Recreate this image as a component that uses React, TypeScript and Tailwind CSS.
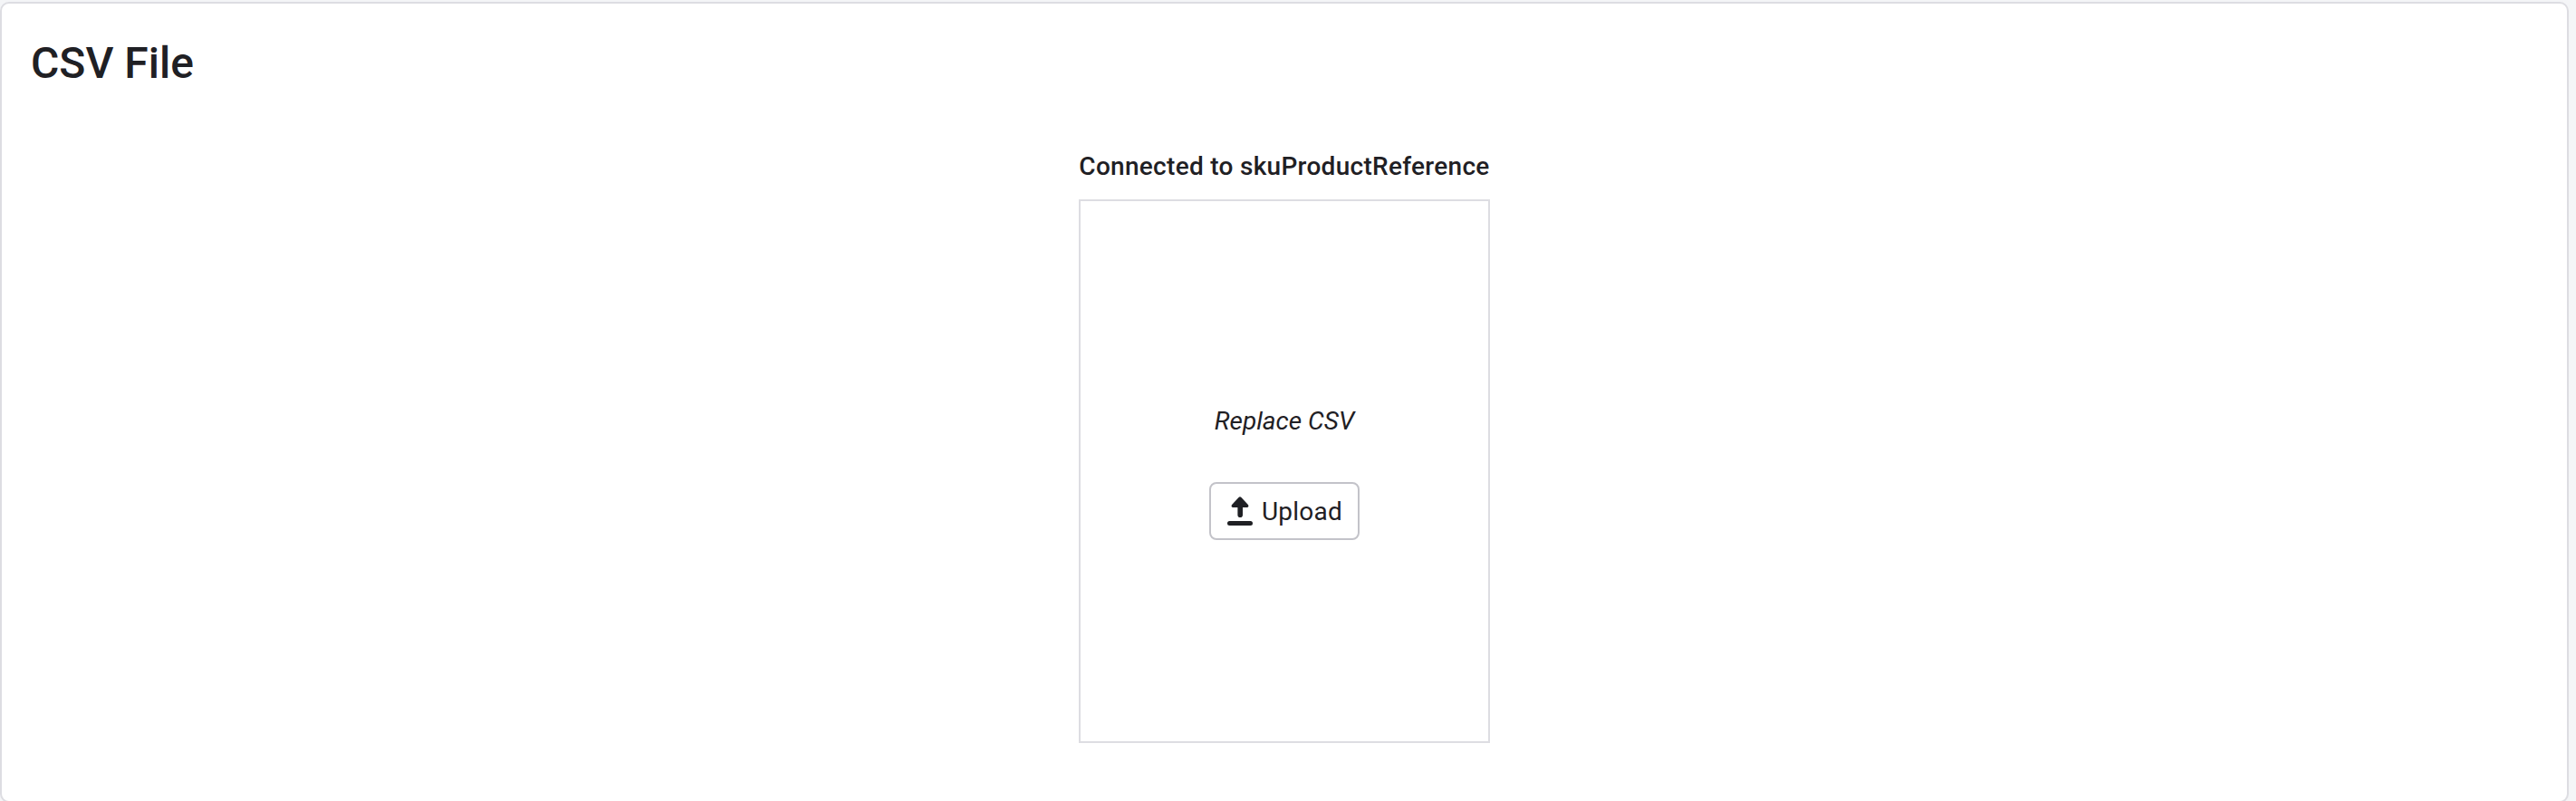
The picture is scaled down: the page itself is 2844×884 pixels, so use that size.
function UploadIcon() {
  return (
    <svg width="28" height="32" viewBox="0 0 28 32" fill="#1f2024" className="shrink-0">
      <path d="M14 .3c.6 0 1 .2 1.500.7l7.400 8c1.100 1.300.4 3-1.200 3H17v8.300a2.800 2.800 0 0 1-5.600 0V12H6.300c-1.600 0-2.300-1.700-1.200-3l7.400-8c.5-.5.900-.7 1.500-.7z" />
      <rect x="0" y="27" width="28" height="5" rx="2.5" />
    </svg>
  );
}

export default function App() {
  return (
    <div className="h-[884px] w-full overflow-hidden bg-[#f4f5f7] pt-[2px] pr-2 font-['Roboto','Noto_Sans',sans-serif] text-[#1f2024]">
      <section className="flex h-[884px] flex-col rounded-[10px] border-2 border-[#dddde2] bg-white">
        <h1 className="mt-[34px] ml-[32px] h-16 self-start text-[48px] leading-[64px] font-medium whitespace-nowrap">
          CSV File
        </h1>
        <div className="mt-[64px] flex flex-col items-center">
          <h2 className="h-9 text-center text-[28px] leading-9 font-medium tracking-[0.29px] whitespace-nowrap">
            Connected to skuProductReference
          </h2>
          <div className="mt-[18px] flex h-[600px] w-[454px] flex-col items-center border-2 border-[#dddde2]">
            <p className="mt-[225px] h-9 text-[28px] leading-9 whitespace-nowrap italic">Replace CSV</p>
            <button className="mt-[49px] flex h-16 w-[166px] items-center gap-[10px] rounded-lg border-2 border-[#c3c3c9] bg-white pl-[18px] text-[28px] leading-9">
              <UploadIcon />
              <span className="pt-px tracking-[0.2px]">Upload</span>
            </button>
          </div>
        </div>
      </section>
    </div>
  );
}
